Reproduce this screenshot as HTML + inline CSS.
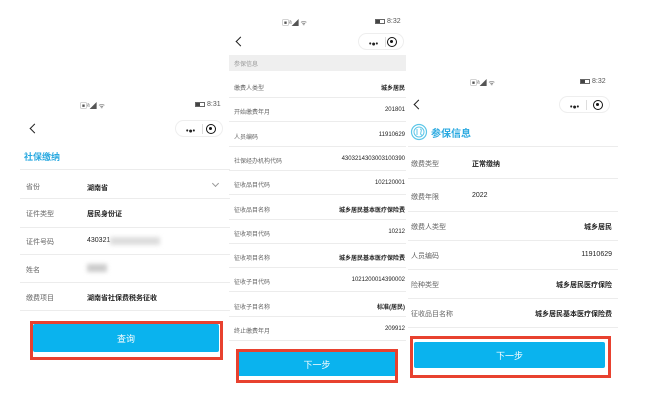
<!DOCTYPE html>
<html><head><meta charset="utf-8">
<style>
*{margin:0;padding:0;box-sizing:border-box}
body{width:647px;height:405px;background:#fff;position:relative;overflow:hidden;font-family:"Liberation Sans","Noto Sans CJK SC",sans-serif;color:#222}
.a{position:absolute;white-space:nowrap}
.lab{font-size:7px;color:#666}
.val{font-size:7px;color:#222;font-weight:bold}
.line{position:absolute;height:1px;background:#ececec}
.red{position:absolute;border:3px solid #e8412f;background:#fff}
.blue{position:absolute;background:#0ab3ee;color:#fff;font-size:9px;display:flex;align-items:center;justify-content:center;border-radius:2px}
.cap{position:absolute;border:1px solid #eee;border-radius:10px;height:17px}
.cap .d{position:absolute;left:10px;top:7px;font-size:7px;font-weight:bold;line-height:1}
.cap .s{position:absolute;left:26px;top:3px;width:1px;height:10px;background:#ddd}
.cap .o{position:absolute;right:6px;top:3px;width:10px;height:10px;border:1.5px solid #111;border-radius:50%}
.cap .o:after{content:"";position:absolute;left:2px;top:2px;width:3px;height:3px;background:#111;border-radius:50%}
.bk{position:absolute;width:7px;height:7px;border-left:1.5px solid #222;border-bottom:1.5px solid #222;transform:rotate(45deg)}
.st{position:absolute;font-size:7px;color:#555}
.bat{display:inline-block;width:10px;height:5px;border:1px solid #666;vertical-align:middle;position:relative;margin-right:2px}
.bat:before{content:"";position:absolute;left:0;top:0;width:4px;height:3px;background:#444}
</style></head><body>

<!-- panel 1 -->
<div class="st" style="left:80px;top:101px">▣ᵃ◢ ᯤ</div>
<div class="st" style="left:195px;top:101px"><span class="bat"></span>8:31</div>
<div class="bk" style="left:31px;top:125px"></div>
<div class="cap" style="left:175px;top:120px;width:48px"><span class="d">•●•</span><span class="s"></span><span class="o"></span></div>
<div class="a" style="left:24px;top:150px;font-size:9px;color:#2aa9e0;font-weight:bold">社保缴纳</div>
<div class="line" style="left:20px;top:169px;width:210px"></div>
<div class="line" style="left:20px;top:198px;width:210px"></div>
<div class="line" style="left:20px;top:227px;width:210px"></div>
<div class="line" style="left:20px;top:254px;width:210px"></div>
<div class="line" style="left:20px;top:282px;width:210px"></div>
<div class="line" style="left:20px;top:310px;width:210px"></div>
<div class="a lab" style="left:26px;top:182px">省份</div><div class="a val" style="left:87px;top:183px">湖南省</div>
<div class="a" style="left:213px;top:181px;width:5px;height:5px;border-right:1px solid #999;border-bottom:1px solid #999;transform:rotate(45deg)"></div>
<div class="a lab" style="left:26px;top:209px">证件类型</div><div class="a val" style="left:87px;top:209px">居民身份证</div>
<div class="a lab" style="left:26px;top:237px">证件号码</div><div class="a val" style="left:87px;top:237px;font-weight:normal">430321</div>
<div class="a" style="left:110px;top:237px;width:50px;height:8px;background:#ddd;filter:blur(2px)"></div>
<div class="a lab" style="left:26px;top:265px">姓名</div>
<div class="a" style="left:87px;top:264px;width:20px;height:8px;background:#ccc;filter:blur(2px)"></div>
<div class="a lab" style="left:26px;top:293px">缴费项目</div><div class="a val" style="left:87px;top:293px">湖南省社保费税务征收</div>
<div class="red" style="left:30px;top:321px;width:193px;height:39px"></div>
<div class="blue" style="left:33px;top:324px;width:186px;height:28px">查询</div>

<!-- panel 2 -->
<div class="st" style="left:282px;top:18px">▣ᵃ◢ ᯤ</div>
<div class="st" style="left:375px;top:18px"><span class="bat"></span>8:32</div>
<div class="bk" style="left:237px;top:38px"></div>
<div class="cap" style="left:358px;top:33px;width:46px"><span class="d">•●•</span><span class="s"></span><span class="o"></span></div>
<div class="a" style="left:229px;top:55px;width:177px;height:16px;background:#efefef"></div>
<div class="a lab" style="left:234px;top:59px;color:#999;font-size:6px">参保信息</div>
<div id="p2"></div>
<div class="red" style="left:236px;top:349px;width:162px;height:34px"></div>
<div class="blue" style="left:239px;top:352px;width:156px;height:24px;border-radius:0">下一步</div>

<!-- panel 3 -->
<div class="st" style="left:470px;top:78px">▣ᵃ◢ ᯤ</div>
<div class="st" style="left:580px;top:78px"><span class="bat"></span>8:32</div>
<div class="bk" style="left:415px;top:101px"></div>
<div class="cap" style="left:559px;top:96px;width:51px"><span class="d">•●•</span><span class="s"></span><span class="o"></span></div>
<svg class="a" style="left:410px;top:123px" width="18" height="18" viewBox="0 0 18 18"><circle cx="9" cy="9" r="7.5" fill="none" stroke="#5cc6e8" stroke-width="1.2"/><circle cx="9" cy="9" r="5" fill="none" stroke="#5cc6e8" stroke-width="1"/><path d="M7 6v6M10 6q2 0 1 3t1 3" stroke="#5cc6e8" fill="none"/></svg>
<div class="a" style="left:431px;top:125px;font-size:10px;color:#2aa9e0;font-weight:bold">参保信息</div>
<div class="line" style="left:408px;top:146px;width:210px"></div>
<div class="line" style="left:408px;top:178px;width:210px"></div>
<div class="line" style="left:408px;top:211px;width:210px"></div>
<div class="line" style="left:408px;top:240px;width:210px"></div>
<div class="line" style="left:408px;top:269px;width:210px"></div>
<div class="line" style="left:408px;top:298px;width:210px"></div>
<div class="line" style="left:408px;top:327px;width:210px"></div>
<div class="a lab" style="left:411px;top:159px">缴费类型</div><div class="a val" style="left:472px;top:159px">正常缴纳</div>
<div class="a lab" style="left:411px;top:192px">缴费年限</div><div class="a val" style="left:472px;top:192px;font-weight:normal">2022</div>
<div class="a lab" style="left:411px;top:222px">缴费人类型</div><div class="a val" style="right:35px;top:222px">城乡居民</div>
<div class="a lab" style="left:411px;top:251px">人员编码</div><div class="a val" style="right:35px;top:251px;font-weight:normal">11910629</div>
<div class="a lab" style="left:411px;top:280px">险种类型</div><div class="a val" style="right:35px;top:280px">城乡居民医疗保险</div>
<div class="a lab" style="left:411px;top:309px">征收品目名称</div><div class="a val" style="right:35px;top:309px">城乡居民基本医疗保险费</div>
<div class="red" style="left:410px;top:336px;width:201px;height:42px"></div>
<div class="blue" style="left:414px;top:342px;width:191px;height:26px">下一步</div>

<script>
var rows=[["缴费人类型","城乡居民",1],["开始缴费年月","201801",0],["人员编码","11910629",0],["社保经办机构代码","430321430300310039­0",0],["征收品目代码","102120001",0],["征收品目名称","城乡居民基本医疗保险费",1],["征收项目代码","10212",0],["征收项目名称","城乡居民基本医疗保险费",1],["征收子目代码","102120001439000 2",0],["征收子目名称","标准(居民)",1],["终止缴费年月","209912",0]];
rows[3][1]="4303214303003100390";rows[8][1]="1021200014390002";
var h="";
for(var i=0;i<rows.length;i++){var y=83+i*24.3;
h+='<div class="a lab" style="left:234px;top:'+y+'px;font-size:6px">'+rows[i][0]+'</div>';
h+='<div class="a val" style="right:242px;top:'+y+'px;font-size:6px;font-weight:'+(rows[i][2]?'bold':'normal')+'">'+rows[i][1]+'</div>';
h+='<div class="line" style="left:229px;top:'+(y+14)+'px;width:177px"></div>';}
document.getElementById("p2").outerHTML=h;
</script>
</body></html>
